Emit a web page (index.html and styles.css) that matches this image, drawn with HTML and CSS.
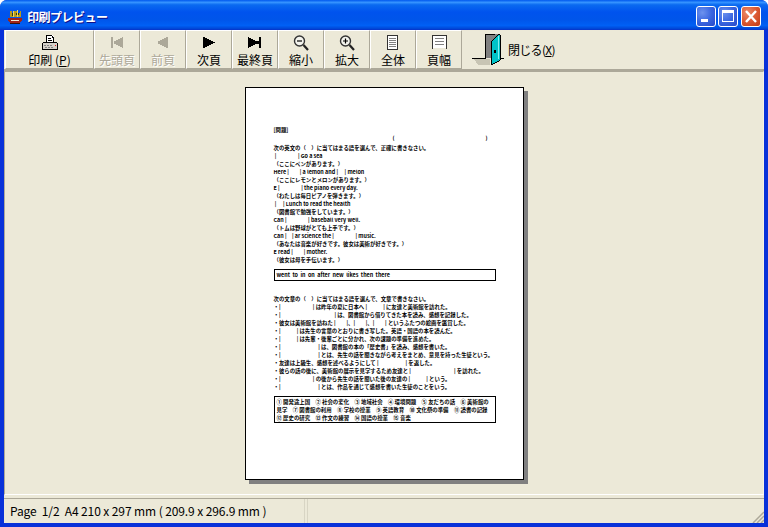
FILE: index.html
```html
<!DOCTYPE html>
<html lang="ja">
<head>
    <meta charset="UTF-8">
    <title>印刷プレビュー</title>
    <link rel="stylesheet" href="styles.css">
</head>
<body>
<div class="window">
    <div class="titlebar">
        <svg class="app-icon" width="16" height="16" viewBox="0 0 16 16" shape-rendering="crispEdges">
            <path d="M3 2h2v2h2V2h3v2h3V2h1v6H3z" fill="#b89a1e"/>
            <path d="M5 4h2v3H5zM9 4h3v2H9z" fill="#2b3a16"/>
            <path d="M6 2h1v6H6zM10 1h1v7h-1z" fill="#f0d860"/>
            <path d="M1 9h14v2l-2 3H3l-2-3z" fill="#a02418"/>
            <path d="M4 11h8v1H4z" fill="#f4e6d0"/>
            <path d="M3 14h10v1H3z" fill="#3a1008"/>
        </svg>
        <span class="title">印刷プレビュー</span>
        <div class="win-btns">
            <div class="win-btn">
                <svg width="18" height="19" viewBox="0 0 18 19" shape-rendering="crispEdges"><path d="M4 12h7v3H4z" fill="#fff"/></svg>
            </div>
            <div class="win-btn">
                <svg width="18" height="19" viewBox="0 0 18 19" shape-rendering="crispEdges"><path d="M3 3h12v12H3zM4 6v8h10V6z" fill="#fff" fill-rule="evenodd"/></svg>
            </div>
            <div class="win-btn win-close">
                <svg width="18" height="19" viewBox="0 0 18 19"><path d="M4 4l10 11M14 4L4 15" stroke="#fff" stroke-width="2.4"/></svg>
            </div>
        </div>
    </div>

    <div class="content">
        <div class="toolbar">
            <div class="tool tool-print">
                <svg width="16" height="16" viewBox="0 0 16 16" shape-rendering="crispEdges">
                    <path d="M4 0h6l2 2v6H4z" fill="#fff"/>
                    <path d="M4 0h6v1H4zM4 1h1v7H4zM10 1h1v1h1v6h-1V3h-1zM6 3h3v1H6zM6 5h4v1H6z" fill="#000"/>
                    <path d="M1 8h14v6H1z" fill="#d4d0c8"/>
                    <path d="M1 7h14v1H1zM0 8h1v6H0zM15 8h1v6h-1zM0 14h16v1H0z" fill="#000"/>
                    <path d="M2 10h2v1H2zM5 10h2v1H5zM8 10h2v1H8zM3 12h2v1H3zM6 12h2v1H6zM9 12h2v1H9z" fill="#808080"/>
                    <path d="M13 10h1v1h-1z" fill="#e01010"/>
                </svg>
                <span class="label">印刷 (<u>P</u>)</span>
            </div>
            <div class="tool off">
                <svg width="16" height="16" viewBox="0 0 16 16" shape-rendering="crispEdges"><path d="M2 2h2v11H2zM14 2v11h-1v-1h-2v-1H9v-1H7V9H5V6h2V5h2V4h2V3h2V2z" fill="currentColor"/></svg>
                <span class="label">先頭頁</span>
            </div>
            <div class="tool off">
                <svg width="16" height="16" viewBox="0 0 16 16" shape-rendering="crispEdges"><path d="M13 2v11h-2v-1H9v-1H7v-1H5V9H3V6h2V5h2V4h2V3h2V2z" fill="currentColor"/></svg>
                <span class="label">前頁</span>
            </div>
            <div class="tool">
                <svg width="16" height="16" viewBox="0 0 16 16" shape-rendering="crispEdges"><path d="M2 2h2v1h2v1h2v1h2v1h2v1h2v1h-2v1h-2v1H8v1H6v1H4v1H2z" fill="#000"/></svg>
                <span class="label">次頁</span>
            </div>
            <div class="tool">
                <svg width="16" height="16" viewBox="0 0 16 16" shape-rendering="crispEdges"><path d="M1 2h1v1h2v1h2v1h2v1h2v3H8v1H6v1H4v1H2v1H1zM12 2h2v11h-2zM10 6h2v3h-2z" fill="#000"/></svg>
                <span class="label">最終頁</span>
            </div>
            <div class="tool">
                <svg width="16" height="16" viewBox="0 0 16 16">
                    <circle cx="6.5" cy="6" r="5" fill="#f4f4ee" stroke="#333" stroke-width="1.4"/>
                    <path d="M4 6h5" stroke="#000" stroke-width="1.2"/>
                    <path d="M10.5 10l4.5 5" stroke="#222" stroke-width="2.2"/>
                </svg>
                <span class="label">縮小</span>
            </div>
            <div class="tool">
                <svg width="16" height="16" viewBox="0 0 16 16">
                    <circle cx="6.5" cy="6" r="5" fill="#f4f4ee" stroke="#333" stroke-width="1.4"/>
                    <path d="M4 6h5M6.5 3.5v5" stroke="#000" stroke-width="1.2"/>
                    <path d="M10.5 10l4.5 5" stroke="#222" stroke-width="2.2"/>
                </svg>
                <span class="label">拡大</span>
            </div>
            <div class="tool">
                <svg width="16" height="16" viewBox="0 0 16 16" shape-rendering="crispEdges">
                    <path d="M2 0h11v15H2z" fill="#fff"/>
                    <path d="M2 0h11v1H2zM2 14h11v1H2zM2 1h1v13H2zM12 1h1v13h-1z" fill="#333"/>
                    <path d="M4 3h7v1H4zM4 5h7v1H4zM4 7h7v1H4zM4 9h7v1H4zM4 11h7v1H4z" fill="#808080"/>
                </svg>
                <span class="label">全体</span>
            </div>
            <div class="tool">
                <svg width="16" height="16" viewBox="0 0 16 16" shape-rendering="crispEdges">
                    <path d="M1 0h15v13H1z" fill="#fff"/>
                    <path d="M1 0h15v1H1zM1 1h1v13H1zM15 1h1v13h-1z" fill="#333"/>
                    <path d="M4 3h9v1H4zM4 6h9v1H4zM4 9h9v1H4z" fill="#808080"/>
                </svg>
                <span class="label">頁幅</span>
            </div>
            <div class="tool-close">
                <svg width="33" height="33" viewBox="0 0 33 33" shape-rendering="crispEdges">
                    <path d="M2 26h16v6H6z" fill="#c8c5b4"/>
                    <path d="M13 1h13v24H13z" fill="#808080"/>
                    <path d="M13 1h10v1H13zM13 2h1v23h-1zM0 25h14v1H0zM26 25h6v1h-6z" fill="#000"/>
                    <path d="M20 8l7-7v1h1v25l-8 5z" fill="#00c4c8"/>
                    <path d="M19 8h1v24h-1zM20 7h1v1h-1zM21 6h1v1h-1zM22 5h1v1h-1zM23 4h1v1h-1zM24 3h1v1h-1zM25 2h1v1h-1zM26 1h2v1h-2zM28 2h1v25h-1zM27 27h1v1h-1zM25 28h2v1h-2zM23 29h2v1h-2zM21 30h2v1h-2zM20 31h1v1h-1z" fill="#000"/>
                    <path d="M22 17h2v3h-2z" fill="#000"/>
                    <path d="M26 3h1v23h-1z" fill="#80f0f0"/>
                </svg>
                <span class="close-label">閉じる(<u>X</u>)</span>
            </div>
        </div>

        <div class="preview">
            <div class="page">
                <p class="ln">[問題]</p>
                <p class="ln name-line"><span>(</span><span>)</span></p>

                <div class="block">
                    <p class="ln">次の英文の（　）に当てはまる語を選んで、正確に書きなさい。</p>
                    <p class="ln"> |　　　　| Go a sea</p>
                    <p class="ln">（ここにペンがあります。）</p>
                    <p class="ln">Here |　　| a lemon and |　 | melon</p>
                    <p class="ln">（ここにレモンとメロンがあります。）</p>
                    <p class="ln">E |　　　　| the piano every day.</p>
                    <p class="ln">（わたしは毎日ピアノを弾きます。）</p>
                    <p class="ln"> |　 | Lunch to read the health</p>
                    <p class="ln">（図書館で勉強をしています。）</p>
                    <p class="ln">Can |　　　　| baseball very well.</p>
                    <p class="ln">（トムは野球がとても上手です。）</p>
                    <p class="ln">Can |　| ar science the |　　　　| music.</p>
                    <p class="ln">（あなたは音楽が好きです。彼女は美術が好きです。）</p>
                    <p class="ln">E read |　　| mother.</p>
                    <p class="ln">（彼女は母を手伝います。）</p>
                </div>

                <div class="word-box">went&nbsp; to&nbsp; in&nbsp; on&nbsp; after&nbsp; new&nbsp; likes&nbsp; then&nbsp; there</div>

                <div class="block block-second">
                    <p class="ln">次の文章の（　）に当てはまる語を選んで、文章で書きなさい。</p>
                    <p class="ln">・|　　　　　　| は昨年の夏に日本へ |　　　| に友達と美術館を訪れた。</p>
                    <p class="ln">・|　　　　　　　　　　| は、図書館から借りてきた本を読み、感想を記録した。</p>
                    <p class="ln">・彼女は美術館を訪ねた |　　|、|　　|、|　　| というふたつの絵画を鑑賞した。</p>
                    <p class="ln">・|　　　| は先生の言葉のとおりに書き写した。英語・国語の本を読んだ。</p>
                    <p class="ln">・|　　　| は先輩・後輩ごとに分かれ、次の課題の準備を進めた。</p>
                    <p class="ln">・|　　　　　　　| は、図書館の本の「歴史書」を読み、感想を書いた。</p>
                    <p class="ln">・|　　　　　　　| とは、先生の話を聞きながら考えをまとめ、意見を持った生徒という。</p>
                    <p class="ln">・友達は上級生、感想を述べるようにして |　　　　　| を返した。</p>
                    <p class="ln">・彼らの話の後に、美術館の展示を見学するため友達と |　　　　　　　　| を訪れた。</p>
                    <p class="ln">・|　　　　　　| の後から先生の話を聞いた後の友達の |　　　| という。</p>
                    <p class="ln">・|　　　　　　　| とは、作品を通じて感想を書いた生徒のことをいう。</p>
                </div>

                <div class="note-box">① 開発途上国　② 社会の変化　③ 地域社会　④ 環境問題　⑤ 友だちの話　⑥ 美術館の見学　⑦ 図書館の利用　⑧ 学校の授業　⑨ 英語教育　⑩ 文化祭の準備　⑪ 読書の記録　⑫ 歴史の研究　⑬ 作文の練習　⑭ 国語の授業　⑮ 音楽</div>
            </div>
        </div>

        <div class="statusbar">
            <div class="status-main">Page&nbsp; 1/2&nbsp; A4 210 x 297 mm ( 209.9 x 296.9 mm )</div>
            <div class="status-side"></div>
            <svg class="grip" width="12" height="12" viewBox="0 0 12 12">
                <path d="M12 1L1 12M12 5L5 12M12 9L9 12" stroke="#aca899" stroke-width="1.5"/>
            </svg>
        </div>
    </div>
</div>
</body>
</html>
```

FILE: styles.css
```css
* {
    padding: 0;
    margin: 0;
    box-sizing: border-box;
}
html, body {
    height: 100%;
    overflow: hidden;
    background: #fff;
}
body {
    font-family: "Noto Sans CJK JP", "Liberation Sans", sans-serif;
    font-size: 12px;
    color: #000;
}
.window {
    height: 527px;
    display: flex;
    flex-direction: column;
    border-radius: 7px 7px 0 0;
    background: #0831d9;
    overflow: hidden;
}

/* title bar */
.titlebar {
    height: 30px;
    flex: none;
    display: flex;
    align-items: center;
    padding: 3px 7px 0 7px;
    background: linear-gradient(to bottom, #0058ee 0%, #3593ff 8%, #0a6af0 16%, #0053ee 40%, #0055ea 65%, #0060f5 85%, #0048d8 95%, #0831c9 100%);
}
.app-icon {
    flex: none;
}
.title {
    margin-left: 4px;
    font-weight: 700;
    font-size: 12px;
    letter-spacing: -0.5px;
    color: #fff;
    text-shadow: 1px 1px 0 #0f1089;
    white-space: nowrap;
}
.win-btns {
    margin-left: auto;
    display: flex;
    gap: 2px;
}
.win-btn {
    width: 20px;
    height: 21px;
    border: 1px solid #fff;
    border-radius: 3px;
    background: radial-gradient(circle at 30% 30%, #6c92ee 0%, #3a66e0 50%, #2648c8 100%);
}
.win-btn svg {
    display: block;
}
.win-close {
    margin-left: 1px;
    background: radial-gradient(circle at 30% 30%, #ec8b6a 0%, #dc5a34 50%, #c03a14 100%);
}

/* body of the window */
.content {
    flex: 1;
    min-height: 0;
    display: flex;
    flex-direction: column;
    margin: 0 4px 4px;
    background: #ece9d8;
}
.toolbar {
    height: 41px;
    flex: none;
    display: flex;
    padding-left: 1px;
    border-bottom: 2px solid #aca899;
}
.tool {
    width: 46px;
    height: 39px;
    display: flex;
    flex-direction: column;
    align-items: center;
    padding-top: 4px;
    border: 1px solid;
    border-color: #fff #aca899 #aca899 #fff;
}
.tool-print {
    width: 89px;
}
.tool svg {
    display: block;
    flex: none;
}
.label {
    margin-top: 1px;
    line-height: 15px;
    white-space: nowrap;
}
.off {
    color: #aca899;
}
.off .label {
    text-shadow: 1px 1px 0 #fff;
}
.tool-close {
    display: flex;
    align-items: center;
    gap: 3px;
    height: 39px;
    padding-left: 10px;
}
.tool-close svg {
    flex: none;
}
.close-label {
    white-space: nowrap;
    letter-spacing: -0.7px;
}

/* preview area */
.preview {
    flex: 1;
    min-height: 0;
    display: flex;
    justify-content: center;
    padding-top: 15px;
    border: 1px solid;
    border-color: #aca899 #f4f2e8 #fff #aca899;
}
.page {
    width: 279px;
    height: 393px;
    flex: none;
    padding: 38px 27px 0 28px;
    background: #fff;
    border: 1px solid #000;
    box-shadow: 4px 4px 0 #808080;
    font-size: 5.4px;
    font-weight: 700;
}
.ln {
    height: 8px;
    line-height: 8px;
    white-space: pre;
}
.name-line {
    display: flex;
    justify-content: space-between;
    width: 95px;
    margin-left: 119px;
}
.block {
    margin-top: 2px;
}
.block-second {
    margin-top: 14px;
}
.word-box {
    margin-top: 5px;
    height: 12px;
    line-height: 10px;
    padding-left: 2px;
    border: 1px solid #000;
    white-space: pre;
}
.note-box {
    margin-top: 5px;
    height: 27px;
    line-height: 8px;
    padding: 1px 2px;
    border: 1px solid #000;
}

/* status bar */
.statusbar {
    position: relative;
    height: 25px;
    flex: none;
    display: flex;
    border-top: 1px solid #aca899;
    margin-top: 3px;
}
.status-main {
    width: 301px;
    padding: 2px 0 0 6px;
    line-height: 20px;
    letter-spacing: -0.1px;
    white-space: pre;
    border-right: 1px solid #d8d5c4;
}
.status-side {
    flex: 1;
    margin-left: 2px;
    border-left: 1px solid #d8d5c4;
}
.grip {
    position: absolute;
    right: 0;
    bottom: 0;
}
```
